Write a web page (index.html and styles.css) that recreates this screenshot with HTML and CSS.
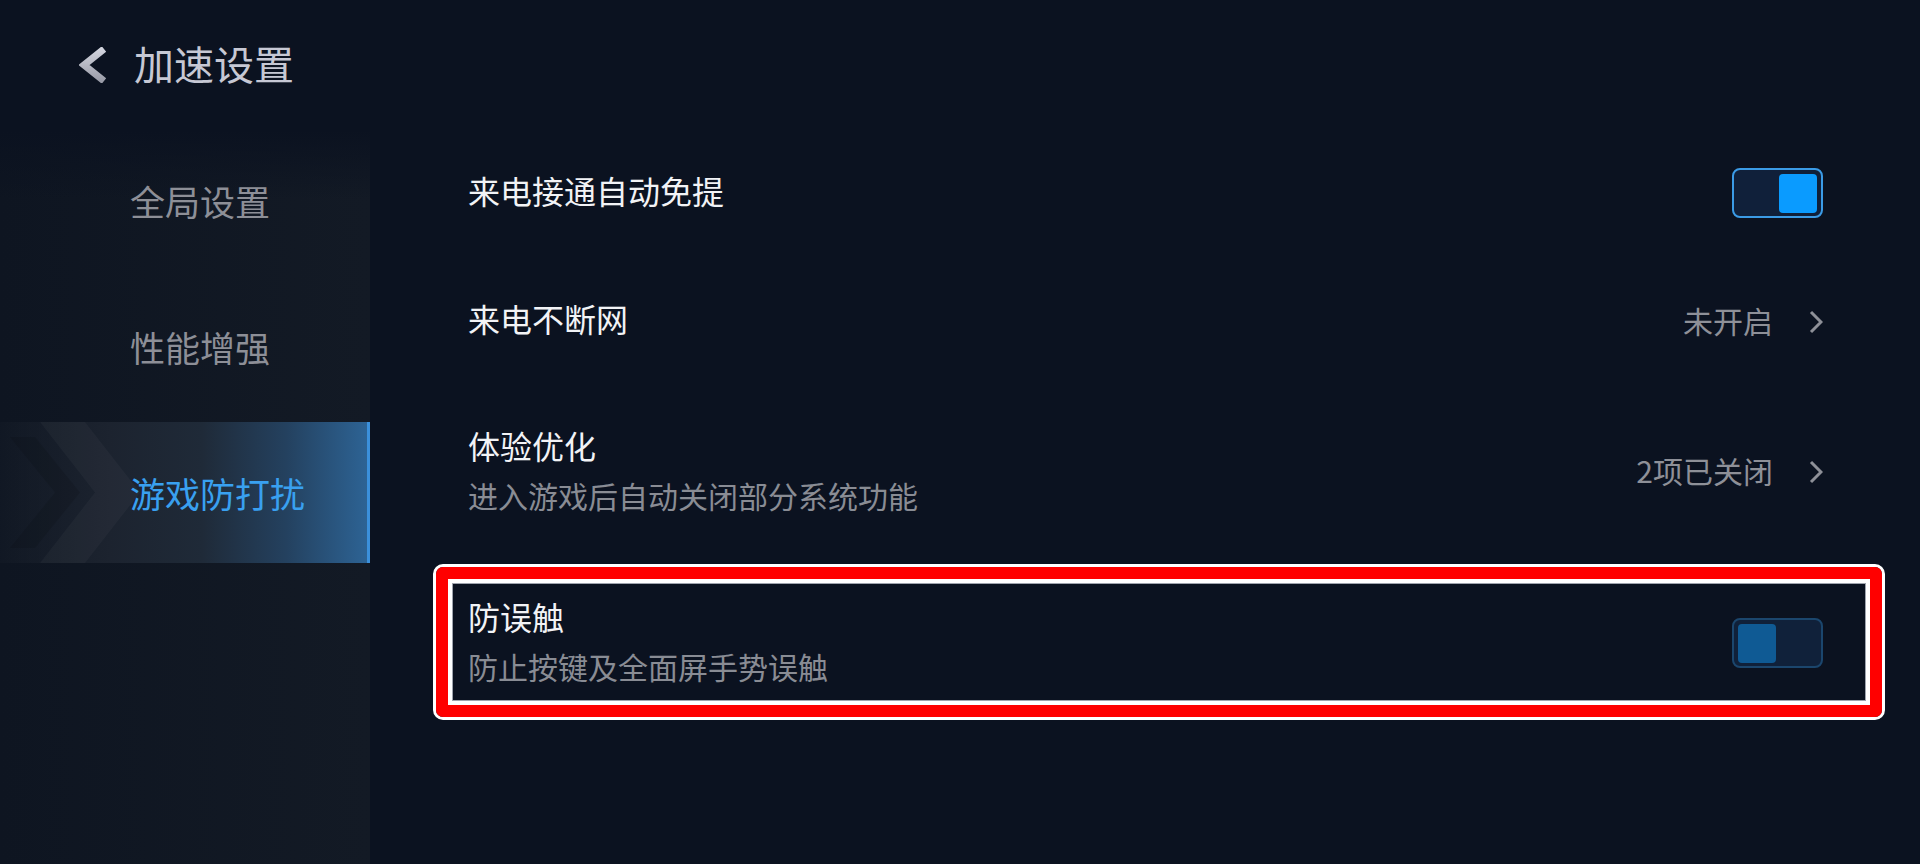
FILE: index.html
```html
<!DOCTYPE html>
<html>

<head>
    <title>加速设置</title>
    <link rel="stylesheet" href="styles.css">
</head>

<body>
    <div class="header">
        <svg class="backBtn" width="28" height="36" viewBox="0 0 28 36">
            <defs>
                <linearGradient id="backGrad" x1="0" y1="0" x2="0" y2="1">
                    <stop offset="0" stop-color="#d2d4de" />
                    <stop offset="1" stop-color="#9a9ca8" />
                </linearGradient>
            </defs>
            <polyline points="25,2 5,18 25,34" fill="none" stroke="url(#backGrad)" stroke-width="7" stroke-linejoin="miter" />
        </svg>
        <h1>加速设置</h1>
    </div>
    <div class="page">
        <div class="sidebar">
            <div class="navItem">全局设置</div>
            <div class="navItem">性能增强</div>
            <div class="navItem active">
                <svg class="navDeco" width="160" height="141" viewBox="0 0 160 141">
                    <polygon points="40,0 85,0 140,70.5 85,141 40,141 95,70.5" fill="rgba(255,255,255,0.03)" />
                    <polygon points="10,15 35,15 80,70.5 35,126 10,126 55,70.5" fill="rgba(0,0,0,0.1)" />
                </svg>
                <span>游戏防打扰</span>
            </div>
        </div>
        <div class="content">
            <div class="row">
                <div class="rowText">
                    <div class="title">来电接通自动免提</div>
                </div>
                <div class="switch on"><span class="knob"></span></div>
            </div>
            <div class="row">
                <div class="rowText">
                    <div class="title">来电不断网</div>
                </div>
                <div class="value">
                    <span>未开启</span>
                    <svg width="14" height="24" viewBox="0 0 14 24">
                        <polyline points="2,2 12,12 2,22" fill="none" stroke="#8e9098" stroke-width="3" />
                    </svg>
                </div>
            </div>
            <div class="row tall">
                <div class="rowText">
                    <div class="title">体验优化</div>
                    <div class="sub">进入游戏后自动关闭部分系统功能</div>
                </div>
                <div class="value">
                    <span>2项已关闭</span>
                    <svg width="14" height="24" viewBox="0 0 14 24">
                        <polyline points="2,2 12,12 2,22" fill="none" stroke="#8e9098" stroke-width="3" />
                    </svg>
                </div>
            </div>
            <div class="row tall marked">
                <div class="mark">
                    <div class="markRed">
                        <div class="markInner"></div>
                    </div>
                </div>
                <div class="rowText">
                    <div class="title">防误触</div>
                    <div class="sub">防止按键及全面屏手势误触</div>
                </div>
                <div class="switch off"><span class="knob"></span></div>
            </div>
        </div>
    </div>
</body>

</html>
```

FILE: styles.css
```css
html,
body {
    margin: 0;
    height: 100%;
}

body {
    background: #0b1220;
    font-family: "Noto Sans CJK SC", "Noto Sans", sans-serif;
    color: #f0f1f4;
    overflow: hidden;
}

.header {
    height: 130px;
    display: flex;
    align-items: center;
    padding-left: 79px;
}

.header h1 {
    margin: -4px 0 0 27px;
    font-size: 40px;
    font-weight: 400;
    color: #c6c8d4;
    line-height: 48px;
}

.page {
    display: flex;
    height: 734px;
}

/* left menu, fades in at the top */
.sidebar {
    width: 370px;
    flex-shrink: 0;
    background:
        linear-gradient(180deg, #0b1220 0px, rgba(11, 18, 32, 0) 70px),
        linear-gradient(90deg, #0e1521 0%, #131a25 100%);
    display: flex;
    flex-direction: column;
    gap: 5px;
}

.navItem {
    position: relative;
    height: 141px;
    display: flex;
    align-items: center;
    padding-left: 130px;
    font-size: 35px;
    color: #8d8f97;
}

.navItem span {
    position: relative;
}

.navItem.active {
    color: #39a0f0;
    background: linear-gradient(90deg, rgba(28, 35, 46, 0.2) 0%, #1c232f 30%, #1f2a38 55%, #24415f 78%, #2d6394 100%);
    border-right: 3px solid #3b90db;
}

.navDeco {
    position: absolute;
    left: 0;
    top: 0;
}

/* settings list */
.content {
    flex: 1;
    padding: 0 97px 0 98px;
}

.row {
    position: relative;
    height: 128px;
    display: flex;
    align-items: center;
    justify-content: space-between;
}

.row .rowText {
    margin-top: -8px;
}

.row.tall {
    height: 172px;
}

.row.tall .rowText {
    margin-top: -4px;
}

.row.marked {
    height: 170px;
}

.title {
    font-size: 32px;
    line-height: 40px;
    color: #f2f3f6;
}

.sub {
    margin-top: 10px;
    font-size: 30px;
    line-height: 40px;
    color: #898c94;
}

.value {
    display: flex;
    align-items: center;
    gap: 36px;
    font-size: 30px;
    color: #8e9098;
}

.value span {
    margin-top: -4px;
}

.value svg {
    display: block;
}

.switch {
    width: 91px;
    height: 50px;
    border: 2px solid #3b9be6;
    border-radius: 8px;
    background: #10203a;
    display: flex;
    align-items: center;
    padding: 0 4px;
    box-sizing: border-box;
}

.row:first-child .switch {
    margin-top: -2px;
}

.switch .knob {
    width: 38px;
    height: 39px;
    border-radius: 4px;
    background: #0a9bff;
}

.switch.on {
    justify-content: flex-end;
}

.switch.off {
    border-color: #1b466d;
    background: #10213a;
}

.switch.off .knob {
    background: #0f5a94;
}

/* red outline drawn around the last row */
.mark {
    position: absolute;
    left: -35px;
    right: -62px;
    top: 6px;
    bottom: 8px;
    border: 3px solid #fff;
    border-radius: 10px;
}

.markRed {
    height: 100%;
    box-sizing: border-box;
    border: 12px solid #ff0000;
    border-radius: 7px;
}

.markInner {
    height: 100%;
    box-sizing: border-box;
    border: 4px solid #fff;
    box-shadow: inset 0 0 0 1px #9ea3ad;
}
```
